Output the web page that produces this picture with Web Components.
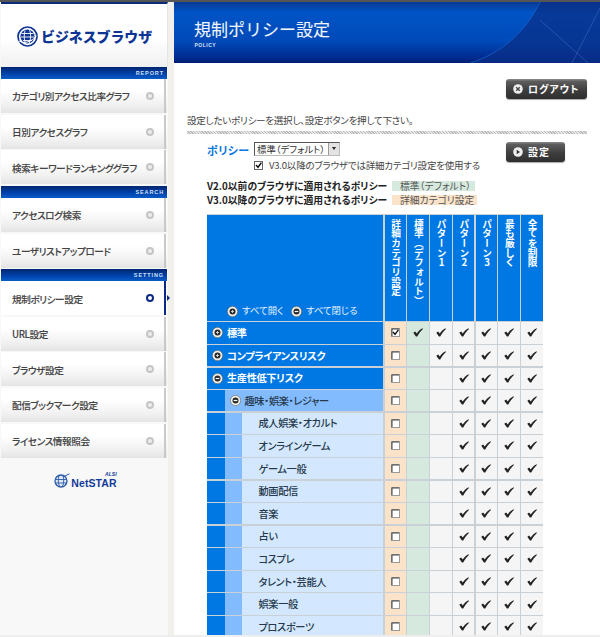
<!DOCTYPE html>
<html lang="ja"><head><meta charset="utf-8"><title>規制ポリシー設定</title>
<style>
html,body{margin:0;padding:0;height:637px;overflow:hidden;background:#fff}
body{font-family:"Noto Sans CJK JP","Noto Sans",sans-serif;color:#333}
</style></head><body>
<app-shell>
  <app-sidebar slot="side">
    <nav-section label="REPORT">
      <nav-item>カテゴリ別アクセス比率グラフ</nav-item>
      <nav-item>日別アクセスグラフ</nav-item>
      <nav-item>検索キーワードランキンググラフ</nav-item>
    </nav-section>
    <nav-section label="SEARCH">
      <nav-item>アクセスログ検索</nav-item>
      <nav-item>ユーザリストアップロード</nav-item>
    </nav-section>
    <nav-section label="SETTING">
      <nav-item active>規制ポリシー設定</nav-item>
      <nav-item>URL設定</nav-item>
      <nav-item>ブラウザ設定</nav-item>
      <nav-item>配信ブックマーク設定</nav-item>
      <nav-item>ライセンス情報照会</nav-item>
    </nav-section>
  </app-sidebar>
  <page-header title-text="規制ポリシー設定" sub="POLICY"></page-header>
  <policy-form></policy-form>
  <policy-table>
    <policy-row level="0" sign="plus" from="1" checked>標準</policy-row>
    <policy-row level="0" sign="plus" from="2">コンプライアンスリスク</policy-row>
    <policy-row level="0" sign="minus" from="3">生産性低下リスク</policy-row>
    <policy-row level="1" sign="minus" from="3">趣味・娯楽・レジャー</policy-row>
    <policy-row level="2" from="3">成人娯楽・オカルト</policy-row>
    <policy-row level="2" from="3">オンラインゲーム</policy-row>
    <policy-row level="2" from="3">ゲーム一般</policy-row>
    <policy-row level="2" from="3">動画配信</policy-row>
    <policy-row level="2" from="3">音楽</policy-row>
    <policy-row level="2" from="3">占い</policy-row>
    <policy-row level="2" from="3">コスプレ</policy-row>
    <policy-row level="2" from="3">タレント・芸能人</policy-row>
    <policy-row level="2" from="3">娯楽一般</policy-row>
    <policy-row level="2" from="3">プロスポーツ</policy-row>
  </policy-table>
</app-shell>
<script>
const FONT='"Noto Sans CJK JP","Noto Sans",sans-serif';
const PALT='font-feature-settings:"palt";';
const sign=(kind,size)=>{
  const mark=kind==='plus'
    ?'<path d="M4.4 6H7.6M6 4.4V7.6" stroke="#ddd" stroke-width="1" fill="none"/>'
    :'<path d="M4 6H8" stroke="#fff" stroke-width="1.3" fill="none"/>';
  return `<svg width="${size}" height="${size}" viewBox="0 0 12 12" style="display:block;flex:none"><circle cx="6" cy="6" r="5.6" fill="#f0efea" stroke="#5c5648" stroke-width=".6"/><circle cx="6" cy="6" r="3.3" fill="#2a2a2a"/>${mark}</svg>`;
};
class Base extends HTMLElement{
  render(html){ if(!this.shadowRoot) this.attachShadow({mode:'open'}); this.shadowRoot.innerHTML=html; }
}
customElements.define('app-shell',class extends Base{connectedCallback(){this.render(`<style>
  :host{display:flex;width:600px;height:637px;overflow:hidden;position:relative;box-sizing:border-box;border-top:2px solid #555;border-bottom:2px solid #eee}
  .side{flex:none;width:174px;display:flex}
  main{flex:1;min-width:0;display:flex;flex-direction:column;overflow:hidden}
</style><div class="side"><slot name="side"></slot></div><main><slot></slot></main>`)}});

customElements.define('app-sidebar',class extends Base{connectedCallback(){this.render(`<style>
  :host{display:flex;flex-direction:column;width:174px;box-sizing:border-box;padding-left:1px;border-right:6px solid #f1f0ec;background:#f8f8f8}
  .logo{height:65px;box-sizing:border-box;border-top:2px solid #0b2a78;background:linear-gradient(#fff 55%,#f0f0f0);display:flex;align-items:center;padding:1px 0 0 16px;gap:3px;border-right:1px solid #e5e5e5}
  .logo b{font:900 13.9px ${FONT};color:#0d3594;font-feature-settings:"palt" 0}
  .foot{display:flex;justify-content:center;align-items:center;padding:6px 0 0 2px;height:30px;gap:1px}
  .ns{position:relative;font:bold 10.5px "Liberation Sans",Arial,sans-serif;color:#123a97;line-height:10px;padding-top:5px;letter-spacing:.1px}
  .ns i{position:absolute;right:0;top:-2px;font:italic bold 5px "Liberation Sans",sans-serif;line-height:6px}
</style>
<div class="logo"><svg width="21" height="21" viewBox="0 0 21 21"><circle cx="10.5" cy="10.5" r="9.5" fill="#fff" stroke="#0d3594" stroke-width="1.7"/><circle cx="10.5" cy="10.5" r="7" fill="#0d3594"/><path d="M4.5 7.5H16.5M4 11H17M6 14.5H15M8 4.5C6.8 9 7 14 8.5 17.5M12.5 3.5C14.2 8 14 14 12 17.5" stroke="#fff" stroke-width=".9" fill="none"/><path d="M2 15C8 18 14 16 19.5 10" stroke="#fff" stroke-width="1" fill="none"/></svg><b>ビジネスブラウザ</b></div>
<slot></slot>
<div class="foot"><svg width="16" height="15" viewBox="0 0 16 15"><circle cx="7" cy="8" r="6" fill="#dfe7f5" stroke="#2c5aa8" stroke-width="1.3"/><path d="M2 6.5H12M2 10H12M5 2.5C4 6 4 10 5.5 13.5M9 2.5C10 6 10 10 8.5 13.5" stroke="#2c5aa8" stroke-width=".9" fill="none"/><path d="M9 4L15.5 .8" stroke="#2c5aa8" stroke-width="1"/></svg><span class="ns"><i>ALSI</i>NetSTAR</span></div>`)}});

customElements.define('nav-section',class extends Base{connectedCallback(){this.render(`<style>
  :host{display:block}
  .bar{height:12px;box-sizing:border-box;background:linear-gradient(#00256f,#0044ad 60%,#0a5cc8);color:#cfe0fa;font:bold 5.5px/12px "Liberation Sans",Arial,sans-serif;letter-spacing:.9px;text-align:right;padding-right:3px;width:166px}
  .items{display:flex;flex-direction:column}
</style><div class="bar">${this.getAttribute('label')}</div><div class="items"><slot></slot></div>`)}});

customElements.define('nav-item',class extends Base{connectedCallback(){const a=this.hasAttribute('active');this.render(`<style>
  :host{display:block;width:166px;height:35.65px;box-sizing:border-box}
  .r{height:34px;margin-bottom:1.65px;box-sizing:border-box;display:flex;align-items:center;padding:.6px 0 0 11px;position:relative;
     background:${a?'#fff':'linear-gradient(#fff 35%,#f1f1f1 75%,#e4e4e4)'};font:500 9.6px/12px ${FONT};${PALT}letter-spacing:-.4px;color:#444;white-space:nowrap;-webkit-text-stroke:.1px #444}
  .t{flex:1}
  .d{position:absolute;right:13px;top:50%;margin-top:-4px;width:8px;height:8px;box-sizing:border-box;border-radius:50%;border:2.4px solid ${a?'#0b2a86':'#c5c5c5'};background:${a?'#fff':'#ececec'}}
  .e{position:absolute;right:1px;top:0;bottom:0;width:2.5px;background:${a?'#0b2a86':'#c9c9c9'}}
  .a{position:absolute;right:-2.5px;top:50%;margin-top:-3px;border-left:3.5px solid #0b2a86;border-top:3px solid transparent;border-bottom:3px solid transparent}
</style><div class="r"><span class="t"><slot></slot></span><span class="d"></span><span class="e"></span>${a?'<span class="a"></span>':''}</div>`)}});

customElements.define('page-header',class extends Base{connectedCallback(){this.render(`<style>
  :host{display:block;height:61px;flex:none;position:relative;overflow:hidden;background:linear-gradient(#083a96,#0054c6 18%,#0049b8 65%,#002a8e 92%,#001f70)}
  h1{margin:0;position:absolute;left:20px;top:15px;font:400 17px/24px ${FONT};color:#f2f6fc;text-shadow:0 0 1px #fff3}
  span{position:absolute;left:20.5px;top:40px;font:bold 5px/6px "Liberation Sans",Arial,sans-serif;color:#d5e2f7;letter-spacing:.5px}
  svg{position:absolute;left:0;top:0}
</style><svg width="426" height="61" viewBox="0 0 426 61"><path d="M366 0C352 30 326 52 296 61H426V0Z" fill="#0a2f86" opacity=".72"/><path d="M366 0C352 30 326 52 296 61" stroke="#1d66d0" fill="none" opacity=".7"/><path d="M366 18L414 61M426 6L398 61" stroke="#4a7ad0" stroke-width=".8" fill="none" opacity=".55"/></svg><h1>${this.getAttribute('title-text')}</h1><span>${this.getAttribute('sub')}</span>`)}});

customElements.define('action-button',class extends Base{connectedCallback(){const x=this.getAttribute('icon')==='x';this.render(`<style>
  :host{display:inline-flex}
  div{height:20px;box-sizing:border-box;width:${this.getAttribute('w')}px;border-radius:3px;background:linear-gradient(#8b8b8b,#5d5d5d 12%,#3e3e3e 55%,#2f2f2f);display:flex;align-items:center;gap:5px;padding:0 0 0 7px;color:#fff;font:bold 10px/20px ${FONT};${PALT}letter-spacing:.9px;box-shadow:0 1px 1px #aaa}
  svg{display:block;flex:none}
</style><div><svg width="10" height="10" viewBox="0 0 10 10"><circle cx="5" cy="5" r="4.8" fill="#eee"/>${x?'<path d="M3.2 3.2L6.8 6.8M6.8 3.2L3.2 6.8" stroke="#444" stroke-width="1.3"/>':'<path d="M3.7 2.8L7 5L3.7 7.2Z" fill="#333"/>'}</svg><slot></slot></div>`)}});

customElements.define('policy-form',class extends Base{connectedCallback(){this.render(`<style>
  :host{display:block;flex:none;padding:0 13px 0 13px;font:400 9.7px/14px ${FONT};${PALT}color:#444}
  .top{display:flex;justify-content:flex-end;padding-top:16px;height:20px}
  .msg{margin-top:14px;height:14px;color:#444;white-space:nowrap;font-size:9.6px;letter-spacing:-.3px}
  .hatch{margin-top:4px;height:3px;background:repeating-linear-gradient(45deg,#bbb 0 1px,#e8e8e8 1px 2px)}
  .row{display:flex;position:relative;padding:8px 0 0 20px;height:38px;box-sizing:content-box}
  .lab{color:#0a78dc;font:bold 11px/14px ${FONT};${PALT}width:47px;letter-spacing:.3px;padding-top:1px}
  .sel{width:86px;height:14px;box-sizing:border-box;border:1px solid;border-color:#555 #bbb #bbb #555;background:#fff;display:flex;align-items:stretch;color:#333;font:9.4px/12px ${FONT};${PALT}padding-left:2px;white-space:nowrap}
  .sel span{flex:1;min-width:0}
  .sel i{flex:none;width:10px;background:#e3e3e3;border-left:1px solid #999;position:relative}
  .sel i:after{content:"";position:absolute;left:2.5px;top:4px;border-top:3px solid #222;border-left:2.5px solid transparent;border-right:2.5px solid transparent}
  .use{position:absolute;left:67px;top:24px;display:flex;align-items:center;gap:6px;white-space:nowrap;font-size:9.5px;letter-spacing:-.2px}
  .use svg{display:block;flex:none}
  .btn{position:absolute;left:319px;top:8px}
  .ln{padding-left:20px;font:bold 9.8px/14px ${FONT};${PALT}color:#222;display:flex;align-items:center;white-space:nowrap;height:14px}
  .ln>span{width:185px;flex:none}
  .ln em{font-style:normal;font-weight:400;color:#555;height:10px;line-height:10px;padding:0 0 0 8px;box-sizing:border-box;flex:none}
  .g{background:#d6e9df;width:83px}.o{background:#fae3c8;width:85px}
</style>
<div class="top"><action-button icon="x" w="81">ログアウト</action-button></div>
<div class="msg">設定したいポリシーを選択し、設定ボタンを押して下さい。</div>
<div class="hatch"></div>
<div class="row"><span class="lab">ポリシー</span><div class="sel"><span>標準（デフォルト）</span><i></i></div>
  <div class="use"><svg width="9" height="9" viewBox="0 0 9 9"><rect x=".5" y=".5" width="8" height="8" fill="#fff" stroke="#666"/><path d="M2 4L4 6.3L7.4 1.6" stroke="#111" stroke-width="1.5" fill="none"/></svg><span>V3.0以降のブラウザでは詳細カテゴリ設定を使用する</span></div>
  <div class="btn"><action-button icon="play" w="59">設定</action-button></div></div>
<div class="ln" style="margin-top:-1px"><span>V2.0以前のブラウザに適用されるポリシー</span><em class="g">標準（デフォルト）</em></div>
<div class="ln"><span>V3.0以降のブラウザに適用されるポリシー</span><em class="o">詳細カテゴリ設定</em></div>`)}});

customElements.define('policy-table',class extends Base{connectedCallback(){
  const heads=['詳細カテゴリ設定','標準（デフォルト）','パターン1','パターン2','パターン3','最も厳しく','全てを制限'];
  this.render(`<style>
  :host{display:grid;flex:none;margin:7px 0 0 33px;width:336px;grid-template-columns:176.4px repeat(7,21.4px);grid-auto-rows:21.25px;grid-template-rows:106px;gap:1.35px;background:#c9d0d6;padding:1px 0 0 0;box-sizing:border-box}
  .h{background:#0078e4;color:#fff}
  .first{display:flex;align-items:flex-end;padding:0 0 4px 20px;gap:4px;font:400 9.4px/14px ${FONT};${PALT}color:#e6f2ff;white-space:nowrap;box-sizing:border-box}
  .first span{margin-right:3.5px}
  .v{writing-mode:vertical-rl;text-orientation:upright;font:bold 9.7px/21.4px ${FONT};padding-top:4px;box-sizing:border-box;white-space:nowrap;display:flex;align-items:center;justify-content:flex-start}
</style><div class="h first">${sign('plus',11)}<span>すべて開く</span>${sign('minus',11)}<span>すべて閉じる</span></div>
${heads.map(t=>`<div class="h v">${t}</div>`).join('')}<slot></slot>`)}});

customElements.define('policy-row',class extends Base{connectedCallback(){
  const level=+this.getAttribute('level'),from=+this.getAttribute('from'),s=this.getAttribute('sign');
  const chk='<svg width="10" height="9" viewBox="0 0 10.5 9"><path d="M.3 4.7L2.3 3.5L3.9 5.5C5.4 3.2 7.4 1.2 10 0L10.4 .8C8 3 6 6 4.4 8.8H3.1Z" fill="#222"/></svg>';
  const box=`<span class="cb"><svg width="9" height="9" viewBox="0 0 9 9"><rect x=".5" y=".5" width="8" height="8" fill="#fff" stroke="#999"/><path d="M1 8V1H8" stroke="#444" fill="none"/>${this.hasAttribute('checked')?'<path d="M2 4L4 6.3L7.4 1.8" stroke="#111" stroke-width="1.4" fill="none"/>':''}</svg></span>`;
  let cells='';
  for(let i=1;i<=6;i++) cells+=`<div class="c ${i===1?'gr':''}">${i>=from?chk:''}</div>`;
  const labelCol=['#0078e4','#82bcff','#d3e8fe'][level];
  this.render(`<style>
  :host{display:contents}
  .l{display:flex;height:100%;overflow:hidden;background:#0078e4}
  .a{flex:none;width:17px}
  .b{flex:none;width:16.5px;background:#82bcff;margin-left:1px}
  .t{flex:1;display:flex;align-items:center;background:${labelCol};color:${level===0?'#fff':'#26384a'};font:${level===0?'bold':'500'} 10.2px/14px ${FONT};${PALT}letter-spacing:-.35px;white-space:nowrap;gap:4px;padding-left:${level===2?17:level===1?4.5:5}px;${level===1?'margin-left:1px;':''}}
  .c,.o{display:flex;align-items:center;justify-content:center;background:#f5f5f5;height:100%}
  .c svg{display:block}
  .o{background:#fae3c8}
  .gr{background:#d6e9df}
  .cb{display:block}
  .cb svg{display:block}
</style><div class="l">${level>0?'<span class="a"></span>':''}${level===2?'<span class="b"></span>':''}<div class="t">${s?sign(s,11):''}<span><slot></slot></span></div></div><div class="o">${box}</div>${cells}`)}});
</script>
</body></html>
